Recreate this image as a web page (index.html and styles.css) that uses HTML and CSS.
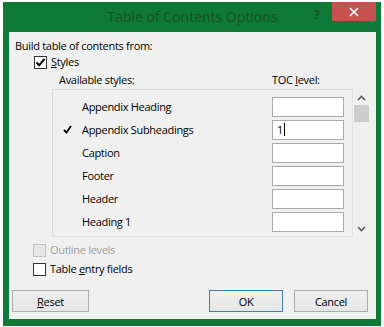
FILE: index.html
```html
<!DOCTYPE html>
<html lang="en">
<head>
    <meta charset="UTF-8">
    <title>Table of Contents Options</title>
    <link rel="stylesheet" href="styles.css">
</head>
<body>
    <div class="window">
        <div class="titlebar">
            <div></div>
            <div class="title">Table of Contents Options</div>
            <div class="title-controls">
                <span class="help">?</span>
                <span class="close">
                    <svg width="10" height="10" viewBox="0 0 10 10"><path d="M1 1L9 9M9 1L1 9" stroke="#fff" stroke-width="1.6"/></svg>
                </span>
            </div>
        </div>
        <div class="content">
            <div class="group-label">Build table of contents from:</div>
            <div class="check-row styles-row">
                <span class="box">
                    <svg width="11" height="11" viewBox="0 0 11 11"><path d="M1.5 5.5L4.2 8.3L9.5 1.8" fill="none" stroke="#000" stroke-width="2"/></svg>
                </span>
                <span><u>S</u>tyles</span>
            </div>
            <div class="list-head">
                <span class="col-name">Available styles:</span>
                <span class="col-level">TOC <u>l</u>evel:</span>
            </div>
            <div class="list-wrap">
                <div class="list">
                    <div class="row"><span class="mark"></span><span class="name">Appendix Heading</span><span class="level"></span></div>
                    <div class="row">
                        <span class="mark"><svg width="9" height="9" viewBox="0 0 9 9"><path d="M1 4.8L3.4 7.5L8 1" fill="none" stroke="#000" stroke-width="1.8"/></svg></span>
                        <span class="name">Appendix Subheadings</span>
                        <span class="level">1<i class="caret"></i></span>
                    </div>
                    <div class="row"><span class="mark"></span><span class="name">Caption</span><span class="level"></span></div>
                    <div class="row"><span class="mark"></span><span class="name">Footer</span><span class="level"></span></div>
                    <div class="row"><span class="mark"></span><span class="name">Header</span><span class="level"></span></div>
                    <div class="row"><span class="mark"></span><span class="name">Heading 1</span><span class="level"></span></div>
                </div>
                <div class="scrollbar">
                    <svg width="9" height="6" viewBox="0 0 9 6"><path d="M1 5L4.5 1.5L8 5" fill="none" stroke="#606060" stroke-width="1.6"/></svg>
                    <div class="thumb"></div>
                    <div class="track"></div>
                    <svg width="9" height="6" viewBox="0 0 9 6"><path d="M1 1L4.5 4.5L8 1" fill="none" stroke="#606060" stroke-width="1.6"/></svg>
                </div>
            </div>
            <div class="check-row disabled">
                <span class="box"></span>
                <span>Outline levels</span>
            </div>
            <div class="check-row entry-row">
                <span class="box"></span>
                <span>Table <u>e</u>ntry fields</span>
            </div>
            <div class="buttons">
                <span class="button"><u>R</u>eset</span>
                <span class="spacer"></span>
                <span class="button default">OK</span>
                <span class="button">Cancel</span>
            </div>
        </div>
    </div>
</body>
</html>
```

FILE: styles.css
```css
body {
    margin: 0;
    background-color: #fff;
    font-family: "Open Sans", "Liberation Sans", sans-serif;
    font-size: 11px;
    letter-spacing: -0.3px;
    color: #000;
}

.window {
    width: 367px;
    margin: 2px 0 0 3px;
    padding: 0 5px 7px 6px;
    background-color: #0f7a37;
}

.titlebar {
    display: grid;
    grid-template-columns: 1fr auto 1fr;
    align-items: start;
    height: 30px;
}

.title {
    padding-top: 5px;
    font-size: 14px;
    letter-spacing: 0;
    color: #1d5127;
}

.title-controls {
    display: flex;
    justify-content: flex-end;
    align-items: flex-start;
}

.help {
    margin: 3px 12px 0 0;
    font-size: 13px;
    font-weight: bold;
    color: #1d5127;
}

.close {
    display: flex;
    align-items: center;
    justify-content: center;
    width: 44px;
    height: 19px;
    background-color: #c75050;
}

.content {
    display: flex;
    flex-direction: column;
    height: 287px;
    background-color: #f0f0f0;
}

.group-label {
    margin: 6px 0 0 6px;
    line-height: 16px;
}

.check-row {
    display: flex;
    align-items: center;
    gap: 4px;
    height: 16px;
    line-height: 16px;
}

.box {
    display: flex;
    align-items: center;
    justify-content: center;
    box-sizing: border-box;
    width: 13px;
    height: 13px;
    border: 1px solid #333;
    background-color: #fff;
}

.styles-row {
    margin: 0 0 0 25px;
}

.list-head {
    display: flex;
    margin: 2px 0 0 50px;
    line-height: 16px;
}

.col-name {
    width: 213px;
}

.list-wrap {
    display: flex;
    margin: 1px 0 0 43px;
}

.list {
    box-sizing: border-box;
    width: 301px;
    height: 148px;
    padding-top: 5px;
    border: 1px solid #dcdcdc;
    border-right-color: #e4e4e4;
    overflow: hidden;
}

.row {
    display: flex;
    align-items: center;
    height: 23px;
}

.mark {
    display: flex;
    width: 19px;
    margin-left: 10px;
}

.name {
    width: 190px;
}

.level {
    display: flex;
    align-items: center;
    box-sizing: border-box;
    width: 72px;
    height: 20px;
    padding-left: 4px;
    border: 1px solid #a9a9a9;
    background-color: #fff;
}

.caret {
    width: 1px;
    height: 13px;
    margin-left: 1px;
    background-color: #000;
}

.scrollbar {
    display: flex;
    flex-direction: column;
    align-items: center;
    width: 17px;
    height: 148px;
    padding-top: 6px;
    box-sizing: border-box;
}

.thumb {
    width: 15px;
    height: 17px;
    margin-top: 4px;
    background-color: #cdcdcd;
}

.track {
    flex: 1;
}

.scrollbar svg:last-child {
    margin-bottom: 5px;
}

.disabled {
    margin: 5px 0 0 24px;
    color: #a0a0a0;
}

.disabled .box {
    border-color: #c4c4c4;
    background-color: #e6e6e6;
}

.entry-row {
    margin: 3px 0 0 24px;
}

.buttons {
    display: flex;
    gap: 11px;
    margin: 13px 8px 0 3px;
}

.spacer {
    flex: 1;
}

.button {
    display: flex;
    align-items: center;
    justify-content: center;
    box-sizing: border-box;
    width: 74px;
    height: 22px;
    border: 1px solid #adadad;
    background: linear-gradient(#f0f0f0, #e5e5e5);
}

.button:first-child {
    width: 77px;
}

.button.default {
    border-color: #3c7fb1;
}
```
